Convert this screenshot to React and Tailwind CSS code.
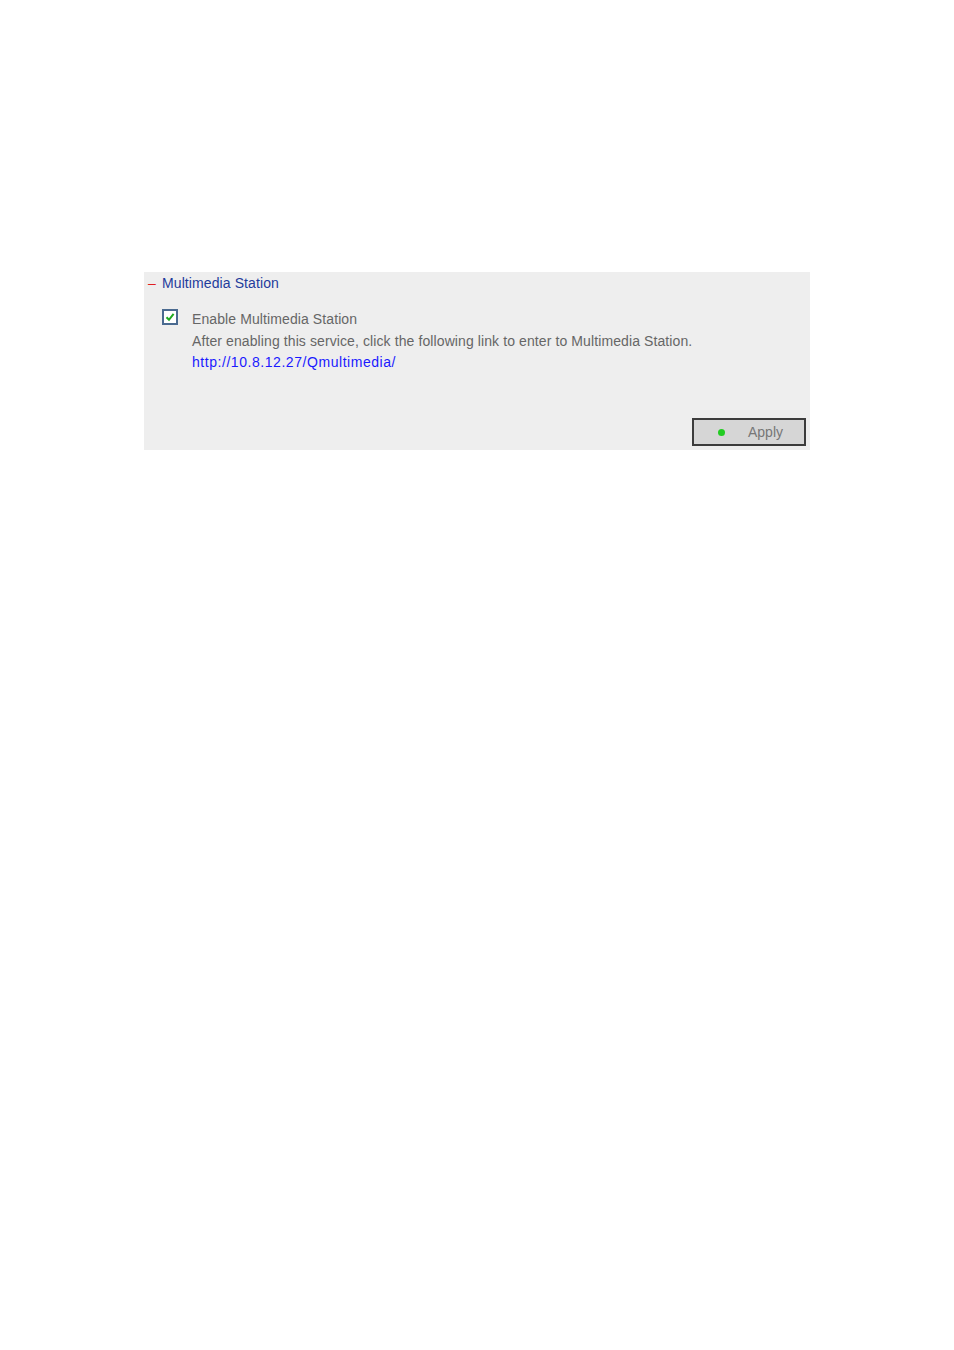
import React, { useState } from "react";

export default function App() {
  const [enabled, setEnabled] = useState(true);

  return (
    <div className="min-h-[1350px] bg-white pt-[272px] pl-[144px]" style={{ fontFamily: '"Liberation Sans", Arial, sans-serif' }}>
      <div className="w-[666px] h-[178px] bg-[#eeeeee] flex flex-col">
        {/* Header */}
        <div className="flex items-center h-[22px] pl-[4px]">
          <span className="text-[#e02020] text-[14px] w-[14px] leading-none">–</span>
          <span className="text-[#1f3c9c] text-[14px] leading-none tracking-[0.1px]">Multimedia Station</span>
        </div>

        {/* Body */}
        <div className="flex pl-[18px] pt-[15px]">
          <button
            onClick={() => setEnabled(!enabled)}
            className="w-[16px] h-[16px] border-2 border-[#4a6a90] bg-white flex items-center justify-center"
          >
            {enabled && (
              <svg width="10" height="10" viewBox="0 0 10 10">
                <path d="M1.5 5.2 L4 7.8 L8.6 1.8" fill="none" stroke="#1faa1f" strokeWidth="2" />
              </svg>
            )}
          </button>
          <div className="ml-[14px] text-[14px] leading-[21.5px] text-[#666666] tracking-[0.1px]">
            <div>Enable Multimedia Station</div>
            <div>After enabling this service, click the following link to enter to Multimedia Station.</div>
            <a href="#" className="text-[#1a1aff] tracking-[0.55px]">http://10.8.12.27/Qmultimedia/</a>
          </div>
        </div>

        {/* Footer */}
        <div className="mt-auto flex justify-end pr-[4px] pb-[4px]">
          <button className="w-[114px] h-[28px] border-2 border-[#3c3c3c] bg-[#d6d6d6] flex items-center">
            <span className="w-[7px] h-[7px] rounded-full bg-[#22cc22] ml-[24px]"></span>
            <span className="ml-[23px] pt-[1px] text-[14px] text-[#777777]">Apply</span>
          </button>
        </div>
      </div>
    </div>
  );
}
